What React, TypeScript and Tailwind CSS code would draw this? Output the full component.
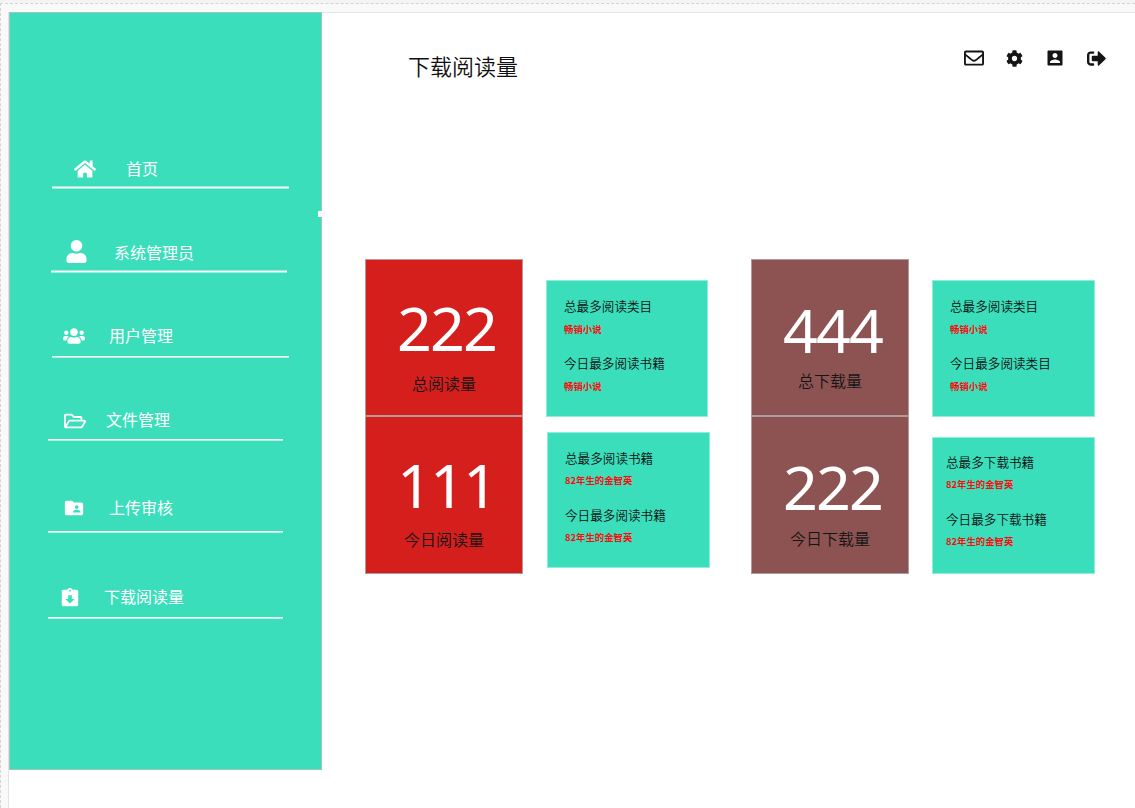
import type { IconType } from "react-icons";
import { FaHome, FaUser, FaUsers, FaRegFolderOpen, FaRegEnvelope, FaSignOutAlt, FaCog } from "react-icons/fa";
import { MdFolderShared, MdAssignmentReturned } from "react-icons/md";

type NavItem = {
  label: string;
  Icon: IconType;
  row: string;
  icon: string;
  text: string;
  line: string;
};

const thick = "h-[3px] border-y border-[#9cefdd] bg-white";
const thin = "h-[2px] border-b border-[#b0f2e4] bg-white";

const navItems: NavItem[] = [
  { label: "首页", Icon: FaHome, row: "ml-[42px] w-[237px]", icon: "ml-[22px] mt-[12px] size-[22px]", text: "ml-[30px] mt-[12px]", line: thick },
  { label: "系统管理员", Icon: FaUser, row: "ml-[41px] w-[236px] mt-[41px]", icon: "ml-[14px] mt-[10px] size-[23px]", text: "ml-[26px] mt-[12px]", line: thick },
  { label: "用户管理", Icon: FaUsers, row: "ml-[42px] w-[237px] mt-[43px]", icon: "ml-[11px] mt-[9px] size-[22px]", text: "ml-[24px] mt-[9px]", line: thin },
  { label: "文件管理", Icon: FaRegFolderOpen, row: "ml-[38px] w-[235px] mt-[41px]", icon: "ml-[16px] mt-[11px] size-[22px]", text: "ml-[20px] mt-[10px]", line: thin },
  { label: "上传审核", Icon: MdFolderShared, row: "ml-[38px] w-[235px] mt-[50px]", icon: "ml-[15px] mt-[6px] size-[22px]", text: "ml-[24px] mt-[6px]", line: thin },
  { label: "下载阅读量", Icon: MdAssignmentReturned, row: "ml-[38px] w-[235px] mt-[44px]", icon: "ml-[11px] mt-[10px] size-[22px]", text: "ml-[23px] mt-[9px]", line: thin },
];

function AccountBox({ className }: { className: string }) {
  return (
    <svg viewBox="0 0 24 24" fill="currentColor" className={className}>
      <path d="M3 4.200v15.600c0 .7.5 1.200 1.200 1.200h15.600c.7 0 1.200-.5 1.200-1.200V4.200c0-.7-.5-1.200-1.200-1.200H4.200C3.500 3 3 3.500 3 4.200zm12 4.800c0 1.660-1.340 3-3 3s-3-1.340-3-3 1.340-3 3-3 3 1.340 3 3zm-9 8c0-2 4-3.100 6-3.100s6 1.100 6 3.100v1H6v-1z" />
    </svg>
  );
}

function Sidebar() {
  return (
    <aside className="relative h-[758px] w-[313px] shrink-0 border border-[#9cc7bd] bg-[#3adebb] pt-[133px] text-white">
      {navItems.map(({ label, Icon, row, icon, text, line }) => (
        <div key={label} className={row}>
          <div className="flex h-10 items-start">
            <Icon className={`shrink-0 ${icon}`} />
            <span className={`text-base leading-5 font-normal whitespace-nowrap ${text}`}>{label}</span>
          </div>
          <div className={line} />
        </div>
      ))}
      <div className="absolute top-[198px] -right-px h-[6px] w-[4px] rounded-tl-[1px] bg-white" />
    </aside>
  );
}

type MetricProps = { value: string; label: string; box: string; number: string; caption: string };

function Metric({ value, label, box, number, caption }: MetricProps) {
  return (
    <div className={`w-[158px] border border-[#b09a9a] ${box}`}>
      <div className={`h-[60px] font-['Noto_Sans'] text-[61px] leading-[60px] font-normal tracking-[-1.9px] text-white ${number}`}>{value}</div>
      <div className={`text-center text-base leading-5 text-[#151515] ${caption}`}>{label}</div>
    </div>
  );
}

type DetailProps = { rows: [string, string][]; box: string; gap: string };

function Detail({ rows, box, gap }: DetailProps) {
  return (
    <div className={`border border-[#8eeed8] bg-[#3adebb] ${box}`}>
      {rows.map(([title, value], i) => (
        <div key={i} className="h-[57px]">
          <div className="text-[12.6px] leading-5 whitespace-nowrap text-[#101010]">{title}</div>
          <div className={`text-[9.4px] leading-[15px] font-bold whitespace-nowrap text-[#f80d0d] ${gap}`}>{value}</div>
        </div>
      ))}
    </div>
  );
}

export default function App() {
  return (
    <div className="h-[808px] w-[1135px] overflow-hidden bg-[#f4f4f4] pt-[3px] font-['Noto_Sans_CJK_SC',sans-serif] font-[350]">
      <div className="h-[805px] border-t border-l border-dashed border-[#d4d4d4] bg-[#f9f9f9] pt-2 pl-[7px]">
        <div className="flex h-[797px] border-t border-l border-[#e4e4e4] bg-white">
          <div className="-mt-px flex w-[313px] shrink-0">
            <Sidebar />
          </div>
          <main className="flex-1">
            <header className="flex h-[110px] items-start">
              <h1 className="mt-[36px] ml-[86px] w-[556px] text-[22px] leading-8 font-[350] text-[#101010]">下载阅读量</h1>
              <FaRegEnvelope className="mt-[35px] size-5 text-[#151515]" />
              <FaCog className="mt-[37px] ml-[22px] size-[17px] text-[#151515]" />
              <AccountBox className="mt-[35px] ml-[22px] size-[20px] text-[#151515]" />
              <FaSignOutAlt className="mt-[36px] ml-[22px] size-[19px] text-[#151515]" />
            </header>
            <section className="mt-[136px] flex items-start pl-[43px]">
              <div>
                <Metric value="222" label="总阅读量" box="h-[157px] bg-[#d51f1d]" number="pl-[31px] mt-[38px]" caption="mt-[15px]" />
                <Metric value="111" label="今日阅读量" box="h-[158px] bg-[#d51f1d]" number="pl-[31px] mt-[38px]" caption="mt-[14px]" />
              </div>
              <div className="ml-[23px] w-[164px]">
                <Detail rows={[["总最多阅读类目", "畅销小说"], ["今日最多阅读书籍", "畅销小说"]]} box="mt-[21px] h-[137px] w-[162px] pt-[15px] pl-[17px]" gap="mt-[6px]" />
                <Detail rows={[["总最多阅读书籍", "82年生的金智英"], ["今日最多阅读书籍", "82年生的金智英"]]} box="mt-[15px] ml-px h-[136px] w-[163px] pt-[15px] pl-[17px]" gap="mt-[5px]" />
              </div>
              <div className="ml-[41px]">
                <Metric value="444" label="总下载量" box="h-[157px] bg-[#8d5353]" number="pl-[31px] mt-[40px]" caption="mt-[10px]" />
                <Metric value="222" label="今日下载量" box="h-[158px] bg-[#8d5353]" number="pl-[31px] mt-[40px]" caption="mt-[11px]" />
              </div>
              <div className="ml-[23px] w-[163px]">
                <Detail rows={[["总最多阅读类目", "畅销小说"], ["今日最多阅读类目", "畅销小说"]]} box="mt-[21px] h-[137px] pt-[15px] pl-[17px]" gap="mt-[6px]" />
                <Detail rows={[["总最多下载书籍", "82年生的金智英"], ["今日最多下载书籍", "82年生的金智英"]]} box="mt-[20px] h-[137px] pt-[14px] pl-[13px]" gap="mt-[5px]" />
              </div>
            </section>
          </main>
        </div>
      </div>
    </div>
  );
}
